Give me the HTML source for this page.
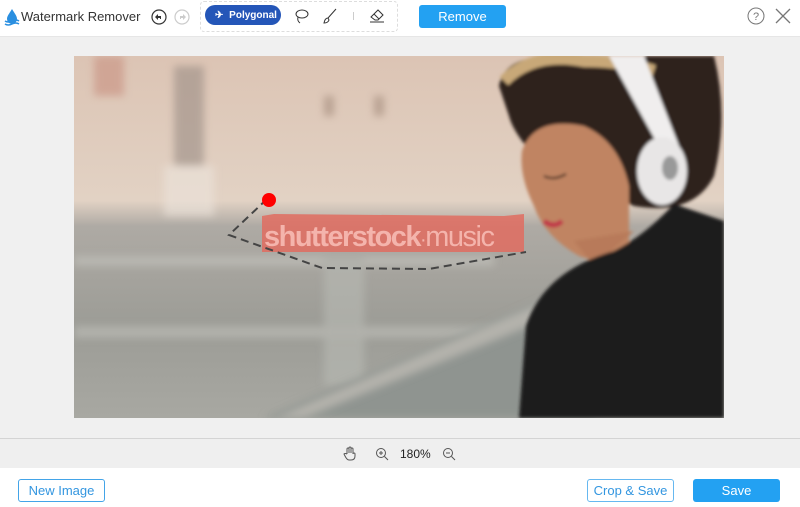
<!DOCTYPE html>
<html><head><style>
body{margin:0;width:800px;height:507px;overflow:hidden;font-family:"Liberation Sans",sans-serif;background:#fff;position:relative}
.top{position:absolute;left:0;top:0;width:800px;height:36px;background:#fff;border-bottom:1px solid #e6e6e6}
.area{position:absolute;left:0;top:37px;width:800px;height:401px;background:#f0f0f0}
.zoombar{position:absolute;left:0;top:438px;width:800px;height:29px;background:#efefef;border-top:1px solid #d4d4d4}
.btn{position:absolute;box-sizing:border-box;border-radius:3px;font-size:13px;text-align:center}
</style></head><body>
<div class="top">
 <svg style="position:absolute;left:4px;top:8px" width="16" height="18" viewBox="0 0 16 18"><path d="M8 1 C5 6 3 8 3 11 a5 5 0 0 0 10 0 C13 8 11 6 8 1z" fill="#2a8fe0"/><path d="M1 13 q3 2 7 0 q4 -2 7 0 M1 16 q3 2 7 0 q4-2 7 0" stroke="#2a8fe0" stroke-width="1.5" fill="none"/></svg>
 <div style="position:absolute;left:21px;top:9px;font-size:13px;color:#333">Watermark Remover</div>
 <svg style="position:absolute;left:151px;top:9px" width="16" height="16"><circle cx="8" cy="8" r="7" fill="none" stroke="#333" stroke-width="1.2"/><path d="M4 8 l3-3 v2 h3 v3 h-1 v-1 h-2 v2z" fill="#333"/></svg>
 <svg style="position:absolute;left:174px;top:9px" width="16" height="16"><circle cx="8" cy="8" r="7" fill="none" stroke="#ccc" stroke-width="1.2"/><path d="M12 8 l-3-3 v2 h-3 v3 h1 v-1 h2 v2z" fill="#ccc"/></svg>
 <div style="position:absolute;left:200px;top:1px;width:196px;height:29px;border:1px dashed #ddd;border-radius:4px"></div>
 <div style="position:absolute;left:205px;top:5px;width:76px;height:20px;background:#2456b8;border-radius:10px;color:#fff;font-size:10px;font-weight:bold;line-height:21px"><span style="margin-left:10px">✈</span> <span style="margin-left:3px">Polygonal</span></div>
 <svg style="position:absolute;left:292px;top:7px" width="18" height="18"><ellipse cx="10" cy="7" rx="6" ry="4" fill="none" stroke="#333"/><path d="M6 10 q-1 4 2 6" fill="none" stroke="#333"/></svg>
 <svg style="position:absolute;left:321px;top:7px" width="18" height="18"><path d="M15 2 l-8 9 M7 11 q-3 0 -4 5 q4 0 5-3z" fill="none" stroke="#333"/></svg>
 <div style="position:absolute;left:353px;top:12px;width:1px;height:8px;background:#ccc"></div>
 <svg style="position:absolute;left:368px;top:6px" width="18" height="18"><path d="M3 11 l7-7 5 5 -5 5 h-3z M6 8 l5 5 M2 16 h14" fill="none" stroke="#333"/></svg>
 <div class="btn" style="left:419px;top:5px;width:87px;height:23px;background:#23a1f2;color:#fff;line-height:23px;font-size:13px">Remove</div>
 <svg style="position:absolute;left:747px;top:7px" width="18" height="18"><circle cx="9" cy="9" r="8" fill="none" stroke="#777"/><text x="9" y="13" font-size="11" text-anchor="middle" fill="#777" font-family="Liberation Sans">?</text></svg>
 <svg style="position:absolute;left:775px;top:8px" width="16" height="16"><path d="M1 1 L15 15 M15 1 L1 15" stroke="#777" stroke-width="1.3"/></svg>
</div>
<div class="area">
<svg style="position:absolute;left:74px;top:19px" width="650" height="362" viewBox="0 0 650 362">
<defs>
<linearGradient id="bg" x1="0" y1="0" x2="0" y2="1"><stop offset="0" stop-color="#dcc4b4"/><stop offset="0.4" stop-color="#e2d2c4"/><stop offset="0.47" stop-color="#aeaaa4"/><stop offset="0.75" stop-color="#9c9c96"/><stop offset="1" stop-color="#a8a8a2"/></linearGradient>
<filter id="b"><feGaussianBlur stdDeviation="4"/></filter>
<filter id="b2"><feGaussianBlur stdDeviation="1.5"/></filter>
</defs>
<rect width="650" height="362" fill="url(#bg)"/>
<g filter="url(#b)" opacity="0.6">
<rect x="20" y="0" width="30" height="40" fill="#c89080"/>
<rect x="100" y="10" width="30" height="100" fill="#9a8c84"/>
<rect x="90" y="110" width="50" height="50" fill="#ece4dc"/>
<rect x="250" y="40" width="10" height="20" fill="#a08878"/>
<rect x="300" y="40" width="10" height="20" fill="#a08878"/>
<rect x="0" y="200" width="420" height="10" fill="#c4c4be"/>
<rect x="250" y="200" width="40" height="130" fill="#b8bab4"/>
<rect x="0" y="270" width="420" height="12" fill="#c0c0ba"/>
</g>
<path d="M190 362 L480 240 L510 255 L520 362z" fill="#8f9490" filter="url(#b)"/>
<path d="M200 362 L470 245 L480 260 L230 362z" fill="#b4b2ac" filter="url(#b)"/>
<g filter="url(#b2)">
<path d="M425 30 Q430 0 480 0 L640 0 Q655 60 640 120 Q620 160 560 150 L470 110 Q440 80 435 60z" fill="#2e241e"/>
<path d="M430 25 q30-30 80-20 q40 0 70 10" stroke="#c8a878" stroke-width="12" fill="none"/>
<path d="M448 95 Q460 60 510 70 Q545 85 555 130 L555 190 Q530 210 505 200 Q470 180 460 150 Q445 120 448 95z" fill="#c08462"/>
<path d="M500 185 L520 210 L560 175z" fill="#b87a5a"/>
<path d="M470 165 q10 8 18 0" stroke="#c03848" stroke-width="5" fill="none"/>
<path d="M470 120 q10 5 22 -2" stroke="#2a1a14" stroke-width="2" fill="none"/>
<path d="M535 0 L570 0 L605 90 L590 100z" fill="#f0eeee"/>
<ellipse cx="588" cy="115" rx="25" ry="34" fill="#e8e6e6"/>
<ellipse cx="596" cy="112" rx="8" ry="12" fill="#999"/>
<path d="M445 362 L452 270 Q470 215 540 195 Q570 180 600 148 L650 165 L650 362z" fill="#1c1a1a"/>
</g>
<path d="M188 160 L200 158 L430 160 L450 158 L450 196 L188 196z" fill="#e06c60" opacity="0.85"/>
<text x="190" y="190" font-size="29" fill="#f4b4ac" font-family="Liberation Sans" letter-spacing="-1.5"><tspan font-weight="bold">shutterstock</tspan><tspan font-size="20">·</tspan>music</text>
<path d="M193 143 L155 179 L248 212 L355 213 L452 196" fill="none" stroke="#444" stroke-width="2" stroke-dasharray="8,5"/>
<circle cx="195" cy="144" r="7" fill="#f00"/>
</svg>
</div>
<div class="zoombar">
 <svg style="position:absolute;left:343px;top:7px" width="14" height="15"><path d="M4 8 V3 a1 1 0 0 1 2 0 V7 V2 a1 1 0 0 1 2 0 V7 V3 a1 1 0 0 1 2 0 V8 a1 1 0 0 1 2 0 V10 q0 4 -4 4 h-2 q-2 0 -4-4 l-1-2 q1-1 3 0" fill="none" stroke="#555"/></svg>
 <svg style="position:absolute;left:375px;top:8px" width="14" height="14"><circle cx="6" cy="6" r="4.5" fill="none" stroke="#555"/><path d="M9.5 9.5 L13 13 M4 6 h4 M6 4 v4" stroke="#555"/></svg>
 <div style="position:absolute;left:400px;top:8px;font-size:12px;color:#222">180%</div>
 <svg style="position:absolute;left:442px;top:8px" width="14" height="14"><circle cx="6" cy="6" r="4.5" fill="none" stroke="#555"/><path d="M9.5 9.5 L13 13 M4 6 h4" stroke="#555"/></svg>
</div>
<div class="btn" style="left:18px;top:479px;width:87px;height:23px;border:1px solid #43a4e8;color:#3396e0;line-height:21px">New Image</div>
<div class="btn" style="left:587px;top:479px;width:87px;height:23px;border:1px solid #66b8f0;color:#3396e0;line-height:21px">Crop &amp; Save</div>
<div class="btn" style="left:693px;top:479px;width:87px;height:23px;background:#23a1f2;color:#fff;line-height:23px">Save</div>
</body></html>
